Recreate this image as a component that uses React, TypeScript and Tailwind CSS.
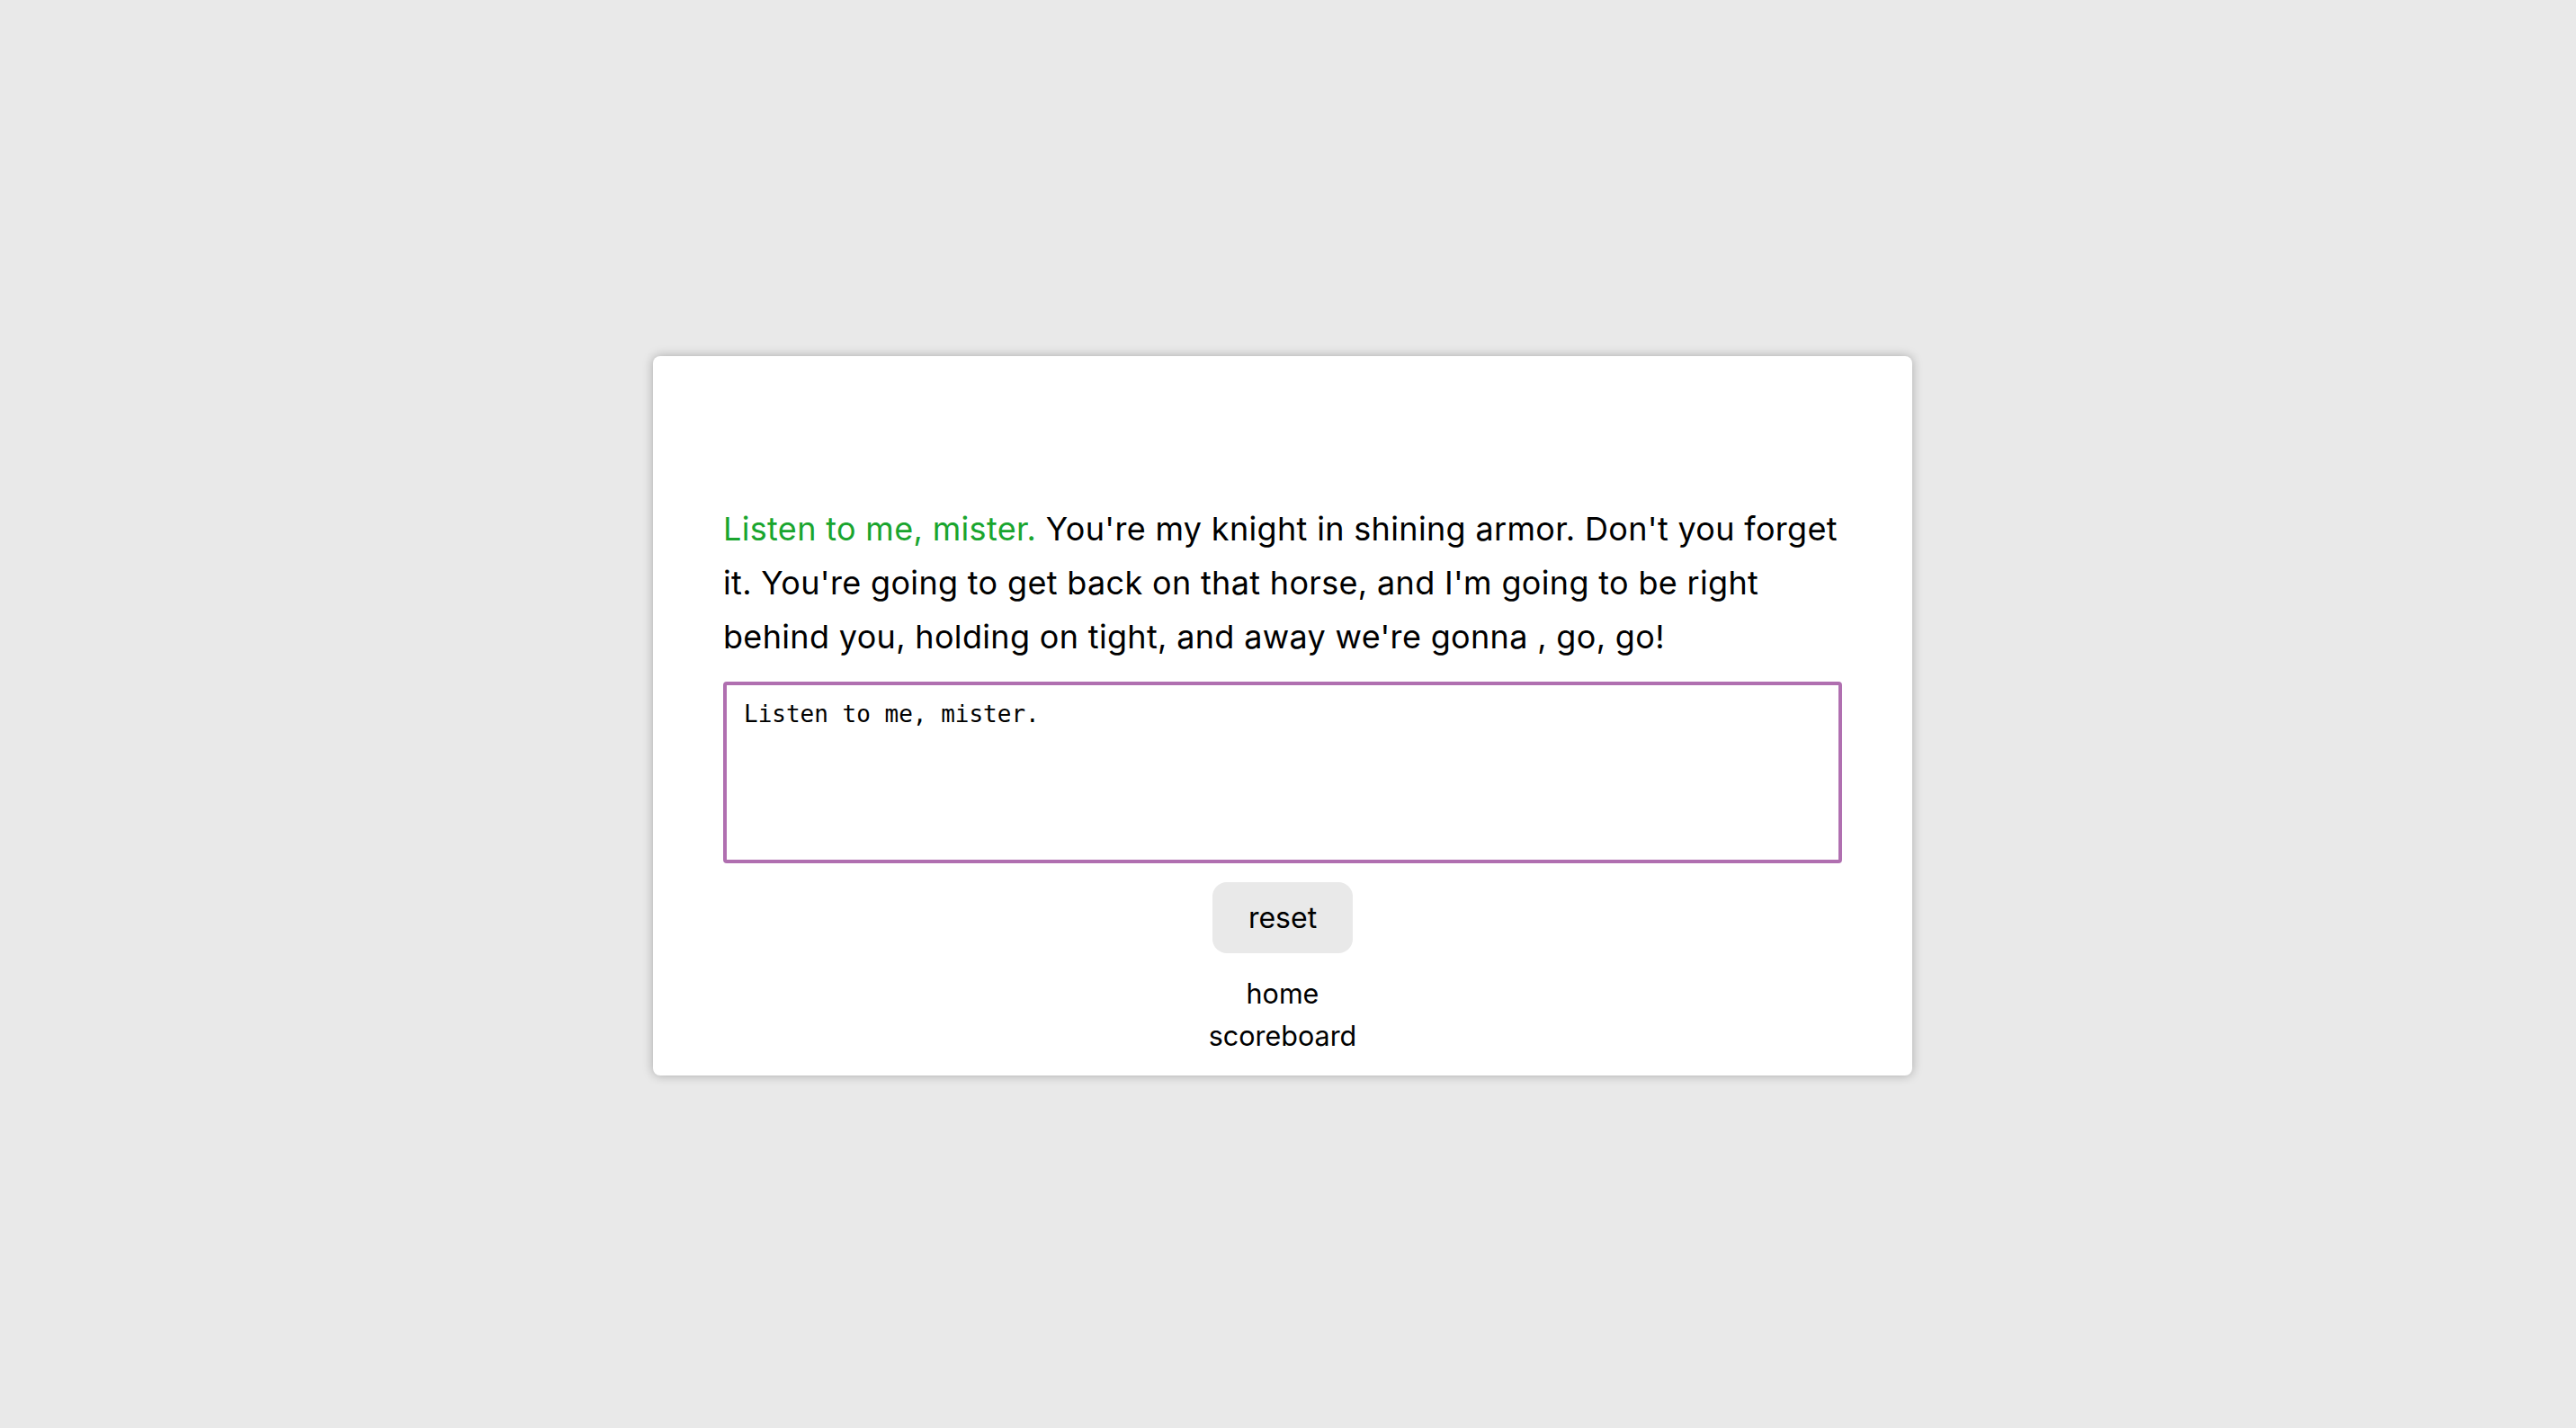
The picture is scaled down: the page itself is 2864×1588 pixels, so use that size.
import { useState } from 'react';

export default function App() {
  const [typed, setTyped] = useState('Listen to me, mister.');

  return (
    <div className="flex min-h-screen items-center justify-center bg-[#e9e9e9] pr-[12px] pt-[4px] font-['Inter',sans-serif] text-black">
      <main className="flex h-[800px] w-[1400px] flex-col items-center rounded-[8px] bg-white px-[78px] pt-[162px] shadow-[0_0_12px_rgba(0,0,0,0.28)]">
        <p className="w-full text-[36px] leading-[60px] tracking-[0.33px]">
          <span className="text-[#1aa52e]">Listen to me, mister.</span> You're my knight in shining armor. Don't
          you forget it. You're going to get back on that horse, and I'm going to be right behind you, holding on
          tight, and away we're gonna , go, go!
        </p>
        <textarea
          value={typed}
          onChange={(e) => setTyped(e.target.value)}
          className="mt-[20px] h-[202px] w-full resize-none rounded-[4px] border-[4px] border-[#b06fb0] px-[19px] py-[17px] font-['DejaVu_Sans_Mono',monospace] text-[26px] leading-[30px] outline-none"
        />
        <button className="mt-[21px] h-[79px] w-[156px] rounded-[16px] bg-[#e9e9e9] text-[32px]">reset</button>
        <nav className="mt-[21px] flex flex-col items-center text-[30.5px] leading-[47px]">
          <a href="#">home</a>
          <a href="#">scoreboard</a>
        </nav>
      </main>
    </div>
  );
}
